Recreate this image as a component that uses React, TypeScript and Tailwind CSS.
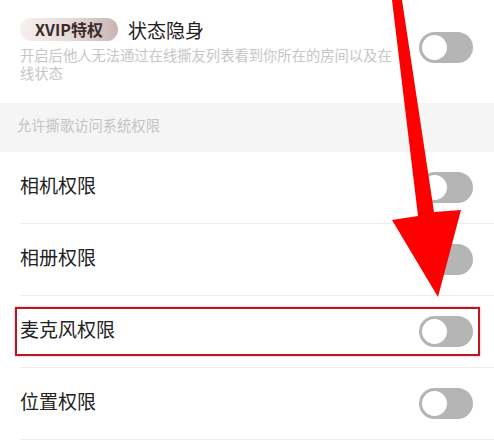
import React from 'react';

const FONT = '"Noto Sans CJK SC", "Noto Sans", sans-serif';

function Toggle({ className = '' }: { className?: string }) {
  return (
    <div className={`w-[54px] h-[31px] rounded-full bg-[#b5b5b5] flex items-center pl-[3px] shrink-0 ${className}`}>
      <div className="w-[25px] h-[25px] rounded-full bg-white" />
    </div>
  );
}

const rows = ['相机权限', '相册权限', '麦克风权限', '位置权限'];

export default function App() {
  return (
    <div className="relative w-[494px] h-[447px] overflow-hidden bg-white" style={{ fontFamily: FONT }}>
      {/* 状态隐身 */}
      <div className="flex items-center justify-between pl-5 pr-[21px] pt-[18px] pb-[21px]">
        <div>
          <div className="flex items-center gap-[10px]">
            <span className="h-[23px] px-[15px] rounded-full bg-gradient-to-r from-[#f6f0ef] via-[#e8dcdb] to-[#c9b4b3] text-[#3a2c2c] text-[16px] font-bold leading-[23px]">
              XVIP特权
            </span>
            <span className="text-[19px] text-[#222] leading-[23px]">状态隐身</span>
          </div>
          <p className="mt-[5px] w-[376px] text-[14.3px] leading-[18px] text-[#c6c6c6]">
            开启后他人无法通过在线撕友列表看到你所在的房间以及在线状态
          </p>
        </div>
        <Toggle className="mb-[6px]" />
      </div>

      {/* section header */}
      <div className="h-[49px] bg-[#f5f5f5] flex items-center pl-[17px] pb-[5px] text-[14.3px] text-[#c4c4c4]">
        允许撕歌访问系统权限
      </div>

      {rows.map((label) => (
        <div key={label} className="pl-5">
          <div className="h-[71px] flex items-center justify-between pr-[21px]">
            <span className="text-[19px] text-[#222] mb-[5px]">{label}</span>
            <Toggle />
          </div>
          <div className="h-px bg-[#ededed]" />
        </div>
      ))}

      {/* annotation box */}
      <div className="absolute left-[15px] top-[307px] w-[465px] h-[49px] border-[2px] border-[#bd1522] shadow-[0_0_2px_rgba(180,0,0,0.4)]" />

      {/* annotation arrow */}
      <svg className="absolute left-0 top-0" width="494" height="447" viewBox="0 0 494 447">
        <polygon
          points="392,0 402,0 434,212 461,210 438,297 392,220 418,216"
          fill="#fe0000"
        />
      </svg>
    </div>
  );
}
